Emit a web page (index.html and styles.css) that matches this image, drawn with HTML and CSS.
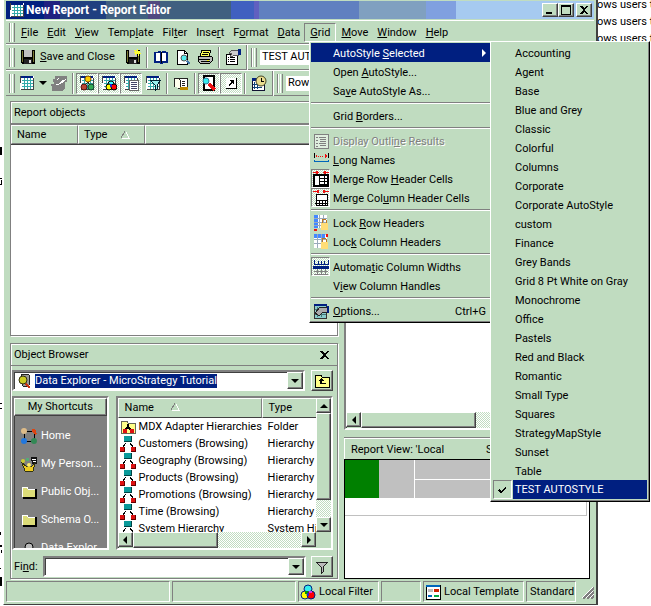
FILE: index.html
```html
<!DOCTYPE html>
<html lang="en">
<head>
<meta charset="utf-8">
<title>New Report - Report Editor</title>
<link rel="stylesheet" href="styles.css">
</head>
<body>
<svg class="defs" aria-hidden="true">
  <symbol id="i-grid" viewBox="0 0 16 16"><path d="M1 1h14v14H1z" fill="#fff"/><path d="M5 3v12M8 3v12M11 3v12M3 5h12M3 8h12M3 11h12" stroke="#3aa" fill="none"/><path d="M1 1h13v2H1z" fill="#001f80"/><path d="M1 1h1v14h13V3h-1v11H2z" fill="#444"/></symbol>
  <symbol id="i-save" viewBox="0 0 16 16"><path d="M1 1h14v14H2l-1-1z" fill="#000"/><path d="M2 2h1v11H2zM13 2h1v11h-1z" fill="#773"/><path d="M4 1h8v7H4z" fill="#c0c0c0"/><path d="M4 10h8v5H4z" fill="#222"/><path d="M9 11h2v3H9z" fill="#ddd"/></symbol>
  <symbol id="i-savenew" viewBox="0 0 16 16"><use href="#i-save"/><path d="M9 1h2v1h1V0h1v2h2v2h1v1h-2v2h-1V5h-2v1h-1V4H9V3h1V2H9z" fill="#ff3"/></symbol>
  <symbol id="i-book" viewBox="0 0 16 16"><path d="M1 3h3l1-1h2l1 1 1-1h3l1 1h2v11h-5l-1 1H7l-1-1H1z" fill="#001f80"/><path d="M3 4h4v8H3zM9 4h4v8H9z" fill="#fff"/><path d="M8 3v11" stroke="#000"/></symbol>
  <symbol id="i-preview" viewBox="0 0 16 16"><path d="M2 1h7l3 3v11H2z" fill="#fff" stroke="#000"/><path d="M9 1v3h3" fill="none" stroke="#000"/><circle cx="9" cy="9" r="3" fill="#5ee" stroke="#555"/><path d="M12 12l3 3" stroke="#47a" stroke-width="2"/></symbol>
  <symbol id="i-print" viewBox="0 0 16 16"><path d="M5 1h9l-2 6H3z" fill="#ff5" stroke="#000"/><path d="M6 3h6M5 5h6" stroke="#000"/><path d="M1 7h13l1 1v4l-2 2H3l-2-2z" fill="#bbb" stroke="#000"/><path d="M1 10h12M4 12h9" stroke="#000"/><path d="M10 11h2v1h-2z" fill="#ee0"/></symbol>
  <symbol id="i-props" viewBox="0 0 16 16"><path d="M1 5h11v10H1z" fill="#fff" stroke="#000"/><path d="M3 8h1M3 10h1M3 12h1M5 8h5M5 10h5M5 12h5" stroke="#000"/><path d="M4 4l3-3h6v5H9l-2 2-2-1 2-2z" fill="#ccc" stroke="#555"/><path d="M13 0h3v6h-3z" fill="#001f80"/></symbol>
  <symbol id="i-sail" viewBox="0 0 16 16"><path d="M4 1h12v6h-2v6l-3 3H1v-5H0V9h3V7H2V4h2z" fill="#808080"/><path d="M2 10l5-1 3-3 5-2-4 4-4 2H2zM5 4l4-1-3 2z" fill="#fff"/></symbol>
  <symbol id="i-balls" viewBox="0 0 16 16"><use href="#i-grid"/><path d="M9 7l-4 4M9 7l3 5" stroke="#222"/><circle cx="9" cy="4" r="3" fill="#fc0" stroke="#850"/><circle cx="5" cy="12" r="3" fill="#b43" stroke="#511"/><circle cx="12" cy="12" r="3" fill="#3a5" stroke="#143"/></symbol>
  <symbol id="i-rgb" viewBox="0 0 16 16"><use href="#i-grid"/><circle cx="10" cy="9" r="3" fill="#3ff" stroke="#000"/><circle cx="8" cy="12" r="3" fill="#ff0" stroke="#000"/><circle cx="13" cy="12" r="3" fill="#f00" stroke="#000"/><path d="M9 9h2v3H9z" fill="#22c"/></symbol>
  <symbol id="i-page" viewBox="0 0 16 16"><use href="#i-grid"/><path d="M6 5h9v10H6z" fill="#fff" stroke="#666"/><path d="M8 7h6M8 9h6M8 11h6M8 13h6" stroke="#446"/></symbol>
  <symbol id="i-gfilter" viewBox="0 0 16 16"><use href="#i-grid"/><path d="M5 5h11l-4 5v4l-2 2v-6z" fill="#9ee" stroke="#023"/></symbol>
  <symbol id="i-script" viewBox="0 0 16 16"><path d="M5 3h9v10H5z" fill="#fff" stroke="#222"/><path d="M1 12V5l1-2h4l1 2v8" fill="#ffe" stroke="#222"/><path d="M9 6h3M9 8h3M9 10h3" stroke="#222"/><path d="M7 12h8v3H7z" fill="#b80"/></symbol>
  <symbol id="i-find" viewBox="0 0 16 16"><path d="M3 1h10v14H3z" fill="#fff" stroke="#000" stroke-width="2"/><circle cx="5" cy="6" r="3" fill="#3ee" stroke="#379"/><path d="M8 9l6 6" stroke="#e11" stroke-width="3"/></symbol>
  <symbol id="i-jump" viewBox="0 0 16 16"><path d="M3 3h10v10H3z" fill="#fff"/><path d="M13 3v10H3" fill="none" stroke="#000"/><path d="M6 5h5v5L9 8l-3 3V9l2-2z" fill="#000"/></symbol>
  <symbol id="i-clock" viewBox="0 0 16 16"><path d="M1 3h12v12H1z" fill="#fff" stroke="#113"/><path d="M1 3h6v3H1z" fill="#001f80"/><path d="M3 7v7M6 7v7M2 9h9M2 12h9" stroke="#147"/><circle cx="10" cy="6" r="5" fill="#e8dc90" stroke="#442"/><path d="M10 3v3h3" stroke="#000" fill="none"/></symbol>
  <symbol id="i-outline" viewBox="0 0 16 16"><path d="M1 1h14v14H1z" fill="#dfeede" stroke="#808080"/><path d="M3 4h2M3 7h2M3 10h2M3 13h2M6 4h7M7 6h6M7 8h6M6 10h7M7 12h6" stroke="#808080"/></symbol>
  <symbol id="i-long" viewBox="0 0 16 16"><path d="M1 1v5M15 1v5" stroke="#000"/><path d="M2 4l2-2v4zM14 4l-2-2v4z" fill="#e11"/><path d="M5 4h6" stroke="#e11" stroke-dasharray="1 1"/><path d="M1 8v1h6l1 1 1-1h6V8" fill="none" stroke="#06b"/></symbol>
  <symbol id="i-mrow" viewBox="0 0 16 16"><path d="M0 1h6M10 1h6" stroke="#e11"/><path d="M3 0h2v3H3zM11 0h2v3h-2z" fill="#e11"/><path d="M1 4h14v11H1z" fill="#fff" stroke="#000" stroke-width="2"/><path d="M6 4v11M11 4v11M6 7h9M6 10h9M6 13h9" stroke="#000"/></symbol>
  <symbol id="i-mcol" viewBox="0 0 16 16"><path d="M0 1h6M10 1h6" stroke="#e11"/><path d="M4 0h2v3H4zM10 0h2v3h-2z" fill="#e11"/><path d="M3 4h11v6H3zM3 10h11v5H3z" fill="#fff" stroke="#000"/><path d="M6 10v6M9 10v6M12 10v6M2 13h13" stroke="#000"/></symbol>
  <symbol id="i-lockr" viewBox="0 0 16 16"><path d="M1 0h13v13H1z" fill="#fff"/><path d="M1 0h4v13H1z" fill="#48f"/><path d="M6 0v13M10 0v13M1 3h13M1 7h13M1 10h13" stroke="#9ab"/><path d="M1 14h3v2H1z" fill="#e11"/><path d="M9 9V5l1-1h2l1 1v4" fill="none" stroke="#b72"/><path d="M8 8h7v7H8z" fill="#fd7"/></symbol>
  <symbol id="i-lockc" viewBox="0 0 16 16"><path d="M1 1h13v13H1z" fill="#fff"/><path d="M1 0h11v4H1z" fill="#48f"/><path d="M4 0v14M8 0v14M1 5h13M1 9h13" stroke="#9ab"/><path d="M13 0h2v3h-2z" fill="#e11"/><path d="M9 9V5l1-1h2l1 1v4" fill="none" stroke="#b72"/><path d="M8 8h7v7H8z" fill="#fd7"/></symbol>
  <symbol id="i-width" viewBox="0 0 16 16"><path d="M1 1v4h14V1M5 2v3M8 2v3M11 2v3" fill="none" stroke="#001f80"/><path d="M0 7h16v3H0z" fill="#001f80"/><path d="M1 12h14M1 15h14M4 10v6M8 10v6M12 10v6" stroke="#808080"/></symbol>
  <symbol id="i-opt" viewBox="0 0 16 16"><path d="M1 1h12v14H1z" fill="#8cc" stroke="#333"/><path d="M1 1h13v2H1z" fill="#001f80"/><path d="M4 4v10M8 4v10M2 6h11M2 11h11" stroke="#477"/><path d="M2 10l5-6h7v5h-4l-4 4z" fill="#aaa" stroke="#222"/><path d="M14 3h2v7h-2z" fill="#001f80"/></symbol>
  <symbol id="i-explore" viewBox="0 0 16 16"><path d="M4 2l2-1h4l2 1v10l-2 1H6z" fill="#999" stroke="#222"/><circle cx="6" cy="7" r="4" fill="#cc2" stroke="#331"/><path d="M9 11l4 4" stroke="#c31" stroke-width="2"/></symbol>
  <symbol id="i-up" viewBox="0 0 16 16"><path d="M1 14V3l1-1h5l1 2h7v10z" fill="#ff8" stroke="#000"/><path d="M7 5l3 3H8v2h4v1H6V8H4z" fill="#000"/></symbol>
  <symbol id="i-home" viewBox="0 0 16 16"><path d="M3 3h10v10H3z" fill="none" stroke="#000"/><circle cx="3" cy="3" r="3" fill="#db8"/><circle cx="3" cy="13" r="3" fill="#27d"/><circle cx="13" cy="13" r="3" fill="#385"/><path d="M11 1h3l2 5-2 1-3-3z" fill="#d41"/></symbol>
  <symbol id="i-person" viewBox="0 0 16 16"><circle cx="2" cy="5" r="2" fill="#cc3"/><path d="M5 2h3v3H5z" fill="#5a7"/><path d="M10 1h6v7h-5z" fill="#111"/><path d="M11 3h4M12 5h3" stroke="#fff"/><path d="M1 7l4 3h6l3-3-2 8H4z" fill="#ec2" stroke="#331"/><circle cx="8" cy="9" r="2" fill="#fe6"/></symbol>
  <symbol id="i-folder" viewBox="0 0 16 16"><path d="M2 14h13V5" fill="none" stroke="#000" stroke-width="2"/><path d="M1 13V3h5l1 2h7v8z" fill="#dcdc78"/><path d="M1 13V3h5l1 2h7" fill="none" stroke="#fff"/></symbol>
  <symbol id="i-mdx" viewBox="0 0 16 16"><path d="M1 14V3l1-1h5l1 2h7v10z" fill="#ff8" stroke="#665"/><path d="M8 5v3M8 8l-3 3M8 8l3 3" stroke="#000" stroke-width="2"/><path d="M3 10h4v4H3zM10 10h4v4h-4z" fill="#d11"/></symbol>
  <symbol id="i-hier" viewBox="0 0 16 16"><path d="M4 0h7v6H4z" fill="#0a9a9a"/><path d="M4 6h8V0h-1v5H4z" fill="#044"/><path d="M6 7l-3 4M10 7l3 4" stroke="#000"/><path d="M0 11h5v5H0zM11 11h5v5h-5z" fill="#d11"/><path d="M4 11h1v5H0v-1h4zM15 11h1v5h-5v-1h4z" fill="#600"/></symbol>
  <symbol id="i-user" viewBox="0 0 16 16"><circle cx="8" cy="7" r="4" fill="#bbb" stroke="#000"/><path d="M3 15l2-4h6l2 4z" fill="#bbb" stroke="#000"/></symbol>
  <symbol id="i-funnel" viewBox="0 0 16 16"><path d="M2 3h12L9 8v5l-2 2V8z" fill="#bbb" stroke="#222"/></symbol>
  <symbol id="i-local" viewBox="0 0 16 16"><circle cx="8" cy="5" r="4" fill="#3ee" stroke="#001f80"/><circle cx="5" cy="11" r="4" fill="#ff0" stroke="#001f80"/><circle cx="11" cy="11" r="4" fill="#f00" stroke="#001f80"/><path d="M5 7h3v3H5z" fill="#090"/><path d="M9 7h3v2H9z" fill="#d3d"/><path d="M7 9h2v3H7z" fill="#22c"/></symbol>
  <symbol id="i-tmpl" viewBox="0 0 16 16"><path d="M1 1h14v14H1z" fill="#fff" stroke="#000"/><path d="M1 1h14v2H1z" fill="#06b"/><path d="M3 5h5v3H3z" fill="#bbb"/><path d="M9 5h5v3H9z" fill="#c20"/><path d="M3 11h4v2H3z" fill="#06b"/><path d="M9 11h5v2H9z" fill="#0a4"/></symbol>
</svg>

<div class="behind">
  <p>ows users to</p><p>ows users to</p><p>ows users to</p>
</div>
<svg class="edge" viewBox="0 0 2 606" aria-hidden="true"><path d="M0 147h2v8H0zM0 178h2v1H0zM1 180h1v5H1zM0 184h2v1H0zM0 403h2v1H0zM0 408h2v1H0zM0 532h1v3H0zM0 545h2v2H0zM1 550h1v3H1zM0 568h1v1H0zM0 577h2v9H0z"/></svg>

<main class="window">
  <header class="title">
    <svg class="icon"><use href="#i-grid"/></svg>
    <h1>New Report - Report Editor</h1>
    <button class="btn cap" aria-label="Minimize"><svg viewBox="0 0 12 10"><path d="M2 7h6v2H2z"/></svg></button>
    <button class="btn cap" aria-label="Maximize"><svg viewBox="0 0 12 10"><path d="M1 0h10v10H1zM2 2v7h8V2z" fill-rule="evenodd"/></svg></button>
    <button class="btn cap close" aria-label="Close"><svg viewBox="0 0 12 10"><path d="M2 1h2l2 2 2-2h2L7 5l3 4H8L6 7 4 9H2l3-4z"/></svg></button>
  </header>

  <nav class="bar menubar">
    <i class="grip"></i>
    <button><u>F</u>ile</button><button><u>E</u>dit</button><button><u>V</u>iew</button><button>Temp<u>l</u>ate</button><button>Fil<u>t</u>er</button><button>Inse<u>r</u>t</button><button>F<u>o</u>rmat</button><button><u>D</u>ata</button><button class="open"><u>G</u>rid</button><button><u>M</u>ove</button><button><u>W</u>indow</button><button><u>H</u>elp</button>
  </nav>

  <div class="bar">
    <i class="grip"></i>
    <button class="tool wide"><svg class="icon"><use href="#i-save"/></svg><span><u>S</u>ave and Close</span></button>
    <button class="tool" aria-label="Save as new"><svg class="icon"><use href="#i-savenew"/></svg></button>
    <i class="sep"></i>
    <button class="tool" aria-label="Open"><svg class="icon"><use href="#i-book"/></svg></button>
    <button class="tool" aria-label="Preview"><svg class="icon"><use href="#i-preview"/></svg></button>
    <button class="tool" aria-label="Print"><svg class="icon"><use href="#i-print"/></svg></button>
    <i class="sep"></i>
    <button class="tool" aria-label="Properties"><svg class="icon"><use href="#i-props"/></svg></button>
    <i class="bandend"></i>
    <i class="grip"></i>
    <select class="style" aria-label="AutoStyle"><option>TEST AUTOSTYLE</option></select>
  </div>

  <div class="bar">
    <i class="grip"></i>
    <button class="tool drop" aria-label="Grid view"><svg class="icon"><use href="#i-grid"/></svg><b class="tri down"></b></button>
    <button class="tool" aria-label="Graph view"><svg class="icon"><use href="#i-sail"/></svg></button>
    <i class="sep"></i>
    <button class="tool on" aria-label="Report objects"><svg class="icon"><use href="#i-balls"/></svg></button>
    <button class="tool on" aria-label="Object browser"><svg class="icon"><use href="#i-rgb"/></svg></button>
    <button class="tool on" aria-label="Page-by"><svg class="icon"><use href="#i-page"/></svg></button>
    <button class="tool" aria-label="View filter"><svg class="icon"><use href="#i-gfilter"/></svg></button>
    <i class="sep"></i>
    <button class="tool" aria-label="Report details"><svg class="icon"><use href="#i-script"/></svg></button>
    <i class="sep"></i>
    <button class="tool on" aria-label="Search"><svg class="icon"><use href="#i-find"/></svg></button>
    <button class="tool on" aria-label="Drill"><svg class="icon"><use href="#i-jump"/></svg></button>
    <i class="sep"></i>
    <button class="tool" aria-label="Schedule"><svg class="icon"><use href="#i-clock"/></svg></button>
    <i class="bandend"></i>
    <i class="grip"></i>
    <select class="style" aria-label="Section"><option>Row Headers</option></select>
  </div>

  <div class="work">
    <div class="col left">
      <section class="pane objects">
        <h2>Report objects</h2>
        <div class="heads"><span class="h-name">Name</span><span class="h-type">Type <svg class="sort" viewBox="0 0 9 8"><path d="M1 7h7L5 1" fill="none" stroke="#fff"/><path d="M4 0L0 7" stroke="#808080"/></svg></span><span class="h-rest"></span></div>
        <div class="blank"></div>
      </section>
      <section class="pane browser">
        <h2>Object Browser <button class="x" aria-label="Close Object Browser"><svg viewBox="0 0 9 8"><path d="M0 0h2l2 2h1l2-2h2L6 4l3 4H7L5 6H4L2 8H0l3-4z"/></svg></button></h2>
        <div class="row">
          <div class="combo sunk"><svg class="icon"><use href="#i-explore"/></svg><input class="picked" aria-label="Location" size="30" value="Data Explorer - MicroStrategy Tutorial"><button class="btn arrow" aria-label="Choose location"><b class="tri down"></b></button></div>
          <button class="btn sq" aria-label="Up one level"><svg class="icon"><use href="#i-up"/></svg></button>
        </div>
        <div class="lists">
          <div class="shortcuts sunk">
            <button class="btn">My Shortcuts</button>
            <ul>
              <li><svg class="icon"><use href="#i-home"/></svg>Home</li>
              <li><svg class="icon"><use href="#i-person"/></svg>My Person...</li>
              <li><svg class="icon"><use href="#i-folder"/></svg>Public Obj...</li>
              <li><svg class="icon"><use href="#i-folder"/></svg>Schema O...</li>
              <li><svg class="icon"><use href="#i-user"/></svg>Data Explor...</li>
            </ul>
          </div>
          <div class="files sunk">
            <div class="clip">
              <table>
                <thead><tr><th class="c-name">Name <svg class="sort" viewBox="0 0 9 8"><path d="M1 7h7L5 1" fill="none" stroke="#fff"/><path d="M4 0L0 7" stroke="#808080"/></svg></th><th>Type</th></tr></thead>
                <tbody>
                  <tr><td><svg class="icon"><use href="#i-mdx"/></svg>MDX Adapter Hierarchies</td><td>Folder</td></tr>
                  <tr><td><svg class="icon"><use href="#i-hier"/></svg>Customers (Browsing)</td><td>Hierarchy</td></tr>
                  <tr><td><svg class="icon"><use href="#i-hier"/></svg>Geography (Browsing)</td><td>Hierarchy</td></tr>
                  <tr><td><svg class="icon"><use href="#i-hier"/></svg>Products (Browsing)</td><td>Hierarchy</td></tr>
                  <tr><td><svg class="icon"><use href="#i-hier"/></svg>Promotions (Browsing)</td><td>Hierarchy</td></tr>
                  <tr><td><svg class="icon"><use href="#i-hier"/></svg>Time (Browsing)</td><td>Hierarchy</td></tr>
                  <tr><td><svg class="icon"><use href="#i-hier"/></svg>System Hierarchy</td><td>System Hierarchy</td></tr>
                </tbody>
              </table>
            </div>
            <div class="scroll v"><button class="btn" aria-label="Scroll up"><b class="tri up"></b></button><i class="btn thumb"></i><i class="track"></i><button class="btn" aria-label="Scroll down"><b class="tri down"></b></button></div>
            <div class="scroll h"><button class="btn" aria-label="Scroll left"><b class="tri lt"></b></button><i class="btn thumb"></i><i class="track"></i><button class="btn" aria-label="Scroll right"><b class="tri rt"></b></button></div>
          </div>
        </div>
        <div class="row find">
          <label for="find">Fi<u>n</u>d:</label>
          <div class="combo sunk"><input id="find"><button class="btn arrow" aria-label="Recent searches"><b class="tri down"></b></button></div>
          <button class="btn sq" aria-label="Filter"><svg class="icon"><use href="#i-funnel"/></svg></button>
        </div>
      </section>
    </div>

    <div class="col right">
      <section class="filter sunk">
        <div class="blank"></div>
        <div class="scroll h"><button class="btn" aria-label="Scroll left"><b class="tri lt"></b></button><i class="btn thumb"></i><i class="track"></i></div>
      </section>
      <section class="view">
        <h2><span>Report View: 'Local</span><span>S</span></h2>
        <div class="canvas">
          <div class="cells"><i class="green"></i><i class="grey"></i><div class="stack"><i></i><i></i></div></div>
          <div class="line"></div>
        </div>
      </section>
    </div>
  </div>

  <footer class="status">
    <span class="s-a"></span><span class="s-b"></span>
    <span class="s-c"><svg class="icon"><use href="#i-local"/></svg>Local Filter</span>
    <span class="s-d"></span>
    <span class="s-e"><svg class="icon"><use href="#i-tmpl"/></svg>Local Template</span>
    <span class="s-f">Standard</span>
    <svg class="size" viewBox="0 0 12 12"><path d="M1 12L12 1M5 12l7-7M9 12l3-3" stroke="#808080" stroke-width="2"/><path d="M0 11L11 0M4 11l7-7M8 11l4-4" stroke="#fff"/></svg>
  </footer>

  <div class="menu main" role="menu">
    <button class="item hot"><i></i><span>AutoStyle <u>S</u>elected</span><b class="tri rt"></b></button>
    <button class="item"><i></i><span>Open <u>A</u>utoStyle...</span></button>
    <button class="item"><i></i><span>Sa<u>v</u>e AutoStyle As...</span></button>
    <hr>
    <button class="item"><i></i><span>Grid <u>B</u>orders...</span></button>
    <hr>
    <button class="item off" disabled><i><svg class="icon"><use href="#i-outline"/></svg></i><span>Display Outli<u>n</u>e Results</span></button>
    <button class="item"><i><svg class="icon"><use href="#i-long"/></svg></i><span><u>L</u>ong Names</span></button>
    <button class="item"><i class="on"><svg class="icon"><use href="#i-mrow"/></svg></i><span>Merge Row <u>H</u>eader Cells</span></button>
    <button class="item"><i class="on"><svg class="icon"><use href="#i-mcol"/></svg></i><span>Merge Col<u>u</u>mn Header Cells</span></button>
    <hr>
    <button class="item"><i><svg class="icon"><use href="#i-lockr"/></svg></i><span>Lock <u>R</u>ow Headers</span></button>
    <button class="item"><i><svg class="icon"><use href="#i-lockc"/></svg></i><span>Loc<u>k</u> Column Headers</span></button>
    <hr>
    <button class="item"><i class="on"><svg class="icon"><use href="#i-width"/></svg></i><span>Automa<u>t</u>ic Column Widths</span></button>
    <button class="item"><i></i><span>V<u>i</u>ew Column Handles</span></button>
    <hr>
    <button class="item"><i><svg class="icon"><use href="#i-opt"/></svg></i><span><u>O</u>ptions...</span><kbd>Ctrl+G</kbd></button>
  </div>

  <div class="menu sub" role="menu">
    <button class="item">Accounting</button><button class="item">Agent</button><button class="item">Base</button><button class="item">Blue and Grey</button><button class="item">Classic</button><button class="item">Colorful</button><button class="item">Columns</button><button class="item">Corporate</button><button class="item">Corporate AutoStyle</button><button class="item">custom</button><button class="item">Finance</button><button class="item">Grey Bands</button><button class="item">Grid 8 Pt White on Gray</button><button class="item">Monochrome</button><button class="item">Office</button><button class="item">Pastels</button><button class="item">Red and Black</button><button class="item">Romantic</button><button class="item">Small Type</button><button class="item">Squares</button><button class="item">StrategyMapStyle</button><button class="item">Sunset</button><button class="item">Table</button>
    <button class="item checked"><i><svg viewBox="0 0 9 8"><path d="M0 4l1-1 2 2 5-5v2L3 8 0 5z"/></svg></i><span>TEST AUTOSTYLE</span></button>
  </div>
</main>
</body>
</html>
```
FILE: styles.css
```css
:root {
  --face: #c0dcc0;
  --navy: #001f80;
  --shade: #808080;
  --dark: #404040;
}
* { box-sizing: border-box; }
body {
  margin: 0;
  min-height: 100vh;
  background: #fff;
  color: #000;
  font: 11px/14px Roboto, "Liberation Sans", Arial, sans-serif;
  position: relative;
  overflow: hidden;
}
button, input, select {
  font: inherit;
  color: inherit;
  margin: 0;
  padding: 0;
  border: 0;
  border-radius: 0;
  background: none;
  appearance: none;
}
h1, h2, p, ul { margin: 0; padding: 0; font-size: inherit; font-weight: normal; list-style: none; }
i { display: block; font-style: normal; }
svg { display: block; flex: none; shape-rendering: crispEdges; }
circle { shape-rendering: auto; }
.defs { display: none; }
.icon { width: 16px; height: 16px; }

.behind { position: absolute; right: 0; top: 0; width: 54px; overflow: hidden; white-space: nowrap; }
.behind p { height: 17px; line-height: 10px; }
.edge { position: absolute; left: 0; top: 0; width: 2px; height: 606px; }

.window {
  position: relative;
  display: flex;
  flex-direction: column;
  height: calc(100vh - 1px);
  margin: 0 53px 0 3px;
  padding: 1px 2px 2px;
  background: var(--face);
  border: solid;
  border-width: 0 2px 1px 1px;
  border-color: #fff var(--dark) var(--dark) #fff;
}

/* raised and sunken edges */
.btn {
  display: flex;
  align-items: center;
  justify-content: center;
  background: var(--face);
  border: 1px solid;
  border-color: #fff var(--dark) var(--dark) #fff;
  box-shadow: inset -1px -1px var(--shade);
}
.sunk {
  border: 2px solid;
  border-color: var(--shade) #fff #fff var(--shade);
  box-shadow: inset 1px 1px var(--dark);
}
.tri { display: block; width: 0; height: 0; border: 4px solid transparent; }
.tri.down { border-top-color: #000; border-bottom: 0; }
.tri.up { border-bottom-color: #000; border-top: 0; }
.tri.lt { border-right-color: #000; border-left: 0; }
.tri.rt { border-left-color: #000; border-right: 0; }

.title {
  display: flex;
  align-items: center;
  height: 18px;
  flex: none;
  padding: 0 2px 0 3px;
  color: #fff;
  background: linear-gradient(90deg, #00207f 38px, #202080 38px 54px, #204080 54px 100px, #405f80 100px 142px, #504880 142px 154px, #406080 154px 225px, #4060c0 225px 248px, #6060c0 248px 253px, #6080c0 253px 353px, #80a0c0 353px 420px, #80a0e0 420px 450px, #a6caf0 450px);
}
.title h1 { flex: 1; padding-left: 1px; font: bold 12px/16px Roboto, "Liberation Sans", Arial, sans-serif; }
.cap { width: 16px; height: 14px; }
.cap svg { width: 12px; height: 10px; }
.close { margin-left: 2px; }

.bar {
  display: flex;
  align-items: center;
  flex: none;
  height: 26px;
  padding-left: 3px;
  border-top: 1px solid #fff;
  border-bottom: 1px solid var(--shade);
}
.menubar { height: 24px; margin-top: 1px; }
.menubar button { height: 19px; padding: 1px 3px 0 4px; border: 1px solid transparent; white-space: nowrap; }
.menubar .open { padding: 1px 5px 0; border-color: var(--shade) #fff #fff var(--shade); }
.menubar .grip { margin-right: 1px; }
.grip {
  width: 6px;
  height: 19px;
  flex: none;
  margin-right: 3px;
  border: solid var(--shade);
  border-width: 0 1px;
  box-shadow: inset 1px 0 #fff, inset -1px 0 var(--face), inset -2px 0 #fff;
}
.tool { display: flex; flex: none; align-items: center; justify-content: center; width: 22px; height: 21px; }
.tool.wide { width: auto; gap: 4px; padding: 0 7px 0 2px; }
.tool.drop { width: 30px; gap: 4px; justify-content: flex-start; padding-left: 1px; }
.on {
  border: 1px solid;
  border-color: var(--shade) #fff #fff var(--shade);
  background: repeating-conic-gradient(#fff 0 25%, var(--face) 0 50%) 0 0 / 2px 2px;
}
.sep { width: 2px; height: 21px; flex: none; margin: 0 2px; border-left: 1px solid var(--shade); border-right: 1px solid #fff; }
.bandend { width: 2px; height: 25px; flex: none; margin: 0 3px 0 2px; border-left: 1px solid var(--shade); border-right: 1px solid #fff; }
.style { width: 120px; height: 15px; padding-left: 2px; background: #fff; }

.work {
  flex: 1;
  min-height: 0;
  display: grid;
  grid-template-columns: minmax(0, 4fr) minmax(0, 3fr);
  gap: 6px;
  padding: 5px 4px 2px;
}
.col { display: flex; flex-direction: column; gap: 7px; min-height: 0; }
.pane {
  display: flex;
  flex-direction: column;
  min-height: 0;
  border: 1px solid var(--shade);
  box-shadow: inset 1px 1px #fff, 1px 1px #fff;
}
.objects { flex: 1; }
.pane h2 { height: 22px; padding: 4px 3px 0; flex: none; border-bottom: 1px solid var(--shade); }
.heads { display: flex; height: 21px; flex: none; border-top: 1px solid var(--shade); border-bottom: 1px solid var(--dark); }
.heads span { display: flex; align-items: center; border: 1px solid; border-color: #fff var(--shade) var(--shade) #fff; padding: 1px 5px 0; }
.h-name { width: 67px; }
.h-type { width: 67px; }
.h-rest { flex: 1; }
.sort { display: inline-block; width: 9px; height: 8px; margin-left: 14px; }
.blank { flex: 1; background: #fff; }

.browser { height: 236px; flex: none; }
.browser h2 { display: flex; justify-content: space-between; padding-right: 8px; }
.x svg { width: 9px; height: 8px; }
.x { height: 14px; }
.row { display: flex; align-items: center; gap: 6px; padding: 4px 4px 4px 1px; }
.combo { display: flex; align-items: center; flex: 1; min-width: 0; height: 21px; background: #fff; }
.combo > .icon { margin: 0 2px 0 3px; }
.combo input { flex: 1; min-width: 0; outline: 0; }
.combo .picked { flex: 0 1 auto; field-sizing: content; height: 14px; background: var(--navy); color: #fff; }
.arrow { width: 16px; height: 17px; margin-left: auto; flex: none; }
.sq { width: 22px; height: 21px; flex: none; }
.lists { flex: 1; min-height: 0; display: grid; grid-template-columns: minmax(0, 4fr) minmax(0, 9fr); gap: 7px; padding: 1px 4px 2px 1px; }
.shortcuts { background: var(--shade); color: #fff; overflow: hidden; min-height: 0; }
.shortcuts .btn { width: 100%; height: 18px; color: #000; }
.shortcuts li { display: flex; align-items: center; gap: 4px; height: 28px; padding-left: 7px; white-space: nowrap; }
.shortcuts ul { padding-top: 6px; }
.files { display: grid; grid-template-columns: minmax(0, 1fr) 15px; grid-template-rows: minmax(0, 1fr) 16px; min-height: 0; background: var(--face); }
.clip { overflow: hidden; background: #fff; }
table { border-collapse: separate; border-spacing: 0; table-layout: fixed; width: 250px; }
th { height: 20px; padding: 0 6px; text-align: left; font-weight: normal; background: var(--face); border: 1px solid; border-color: #fff var(--shade) var(--dark) #fff; }
.c-name { width: 144px; }
td { height: 17px; padding: 0 6px; line-height: 16px; white-space: nowrap; }
td:first-child { padding: 0 0 0 2px; }
td .icon { display: inline-block; vertical-align: top; margin-right: 3px; }
.scroll { display: flex; }
.scroll > button { flex: none; width: 15px; height: 15px; }
.scroll .track { flex: 1; background: repeating-conic-gradient(#fff 0 25%, var(--face) 0 50%) 0 0 / 2px 2px; }
.v { flex-direction: column; }
.v .thumb { flex: 5; }
.h .thumb { flex: 1; }
.find label { padding-left: 2px; }
.find { gap: 5px; padding-top: 4px; padding-bottom: 0; margin-bottom: 1px; }

.filter { flex: 1; display: flex; flex-direction: column; }
.filter .scroll { height: 16px; }
.view { height: 142px; display: flex; flex-direction: column; border-top: 1px solid var(--shade); box-shadow: inset 1px 1px #fff; }
.view h2 { display: flex; gap: 42px; height: 21px; padding: 5px 7px 0; flex: none; }
.canvas { flex: 1; background: #fff; border: 1px solid #000; }
.cells { display: flex; height: 38px; }
.green { width: 34px; background: #008000; }
.grey { width: 35px; background: #c0c0c0; }
.stack { flex: 1; display: grid; gap: 1px; margin: 0 2px 0 1px; }
.stack i { background: #c0c0c0; }
.line { height: 18px; margin-right: 2px; border: solid #c0c0c0; border-width: 0 1px 1px 0; }

.status { display: flex; gap: 2px; height: 21px; flex: none; }
.status span { display: flex; align-items: center; gap: 3px; padding: 1px 3px 0 1px; border: 1px solid; border-color: var(--shade) #fff #fff var(--shade); white-space: nowrap; }
.s-a { flex: 4; }
.s-b { flex: 3; }
.s-c { width: 81px; }
.s-d { width: 40px; }
.s-e { width: 101px; }
.status .s-f { width: 50px; padding-left: 3px; }
.size { width: 12px; height: 12px; margin: 6px 0 0 4px; }

.menu {
  position: absolute;
  background: var(--face);
  padding: 1px;
  border: 1px solid;
  border-color: #fff #000 #000 #fff;
  box-shadow: inset -1px -1px var(--shade);
}
.main { left: 305px; top: 41px; width: 183px; padding-bottom: 2px; }
.sub { left: 486px; top: 41px; width: 160px; padding: 1px 2px 2px; }
.item { display: flex; align-items: center; width: 100%; height: 19px; padding-right: 4px; text-align: left; white-space: nowrap; }
.item > i { display: flex; align-items: center; justify-content: center; width: 19px; height: 19px; margin-right: 3px; }
.item span, .item kbd { padding-top: 2px; }
.item kbd { margin-left: auto; font: inherit; }
.item .tri.rt { margin-left: auto; border-left-color: #fff; }
.hot { background: var(--navy); color: #fff; }
.off { color: var(--shade); text-shadow: 1px 1px #fff; }
.menu hr { height: 2px; margin: 2px 0; border: solid; border-width: 1px 0; border-color: var(--shade) transparent #fff; }
.sub .item { padding: 2px 0 0 22px; }
.sub .checked { padding: 0; }
.sub .checked > i { border: 1px solid; border-color: var(--shade) #fff #fff var(--shade); margin-right: 1px; }
.checked svg { width: 9px; height: 8px; }
.sub .checked span { flex: 1; height: 19px; padding: 3px 2px 0; background: var(--navy); color: #fff; }
```
